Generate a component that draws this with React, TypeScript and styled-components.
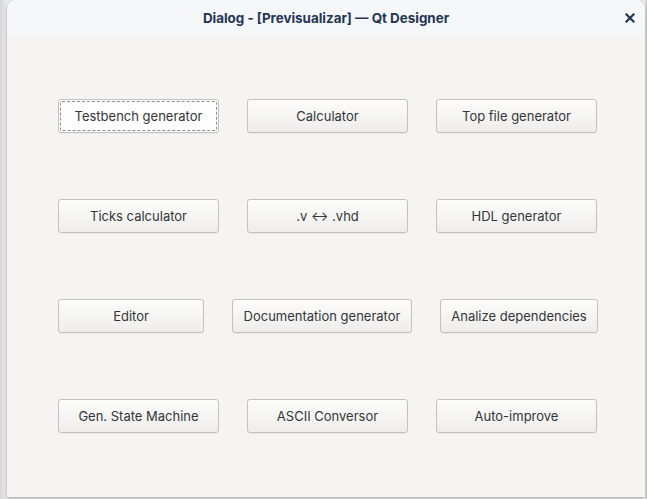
import React from "react";
import styled, { createGlobalStyle } from "styled-components";

const Global = createGlobalStyle`
  html, body { margin: 0; padding: 0; }
  body {
    width: 647px;
    height: 499px;
    overflow: hidden;
    background: #c9c9c9;
    font-family: Inter, "Noto Sans", sans-serif;
  }
`;

const Screen = styled.div`
  width: 647px;
  height: 499px;
  padding-left: 7px;
  padding-right: 2px;
  box-sizing: border-box;
  background: linear-gradient(to right, #d6d6d6, #ececec 7px, #ececec calc(100% - 2px), #bdbdbd);
`;

const Window = styled.div`
  width: 638px;
  height: 497px;
  border-radius: 9px 9px 0 0;
  overflow: hidden;
  display: flex;
  flex-direction: column;
  box-shadow: 0 1px 3px rgba(0, 0, 0, 0.35);
  background: #f5f4f2;
`;

const TitleBar = styled.div`
  height: 35px;
  flex: none;
  background: #f6f7f9;
  display: flex;
  align-items: center;
  justify-content: center;
  position: relative;
`;

const Title = styled.div`
  font-family: Inter, "Noto Sans", sans-serif;
  font-weight: 700;
  font-size: 13.4px;
  color: #1f3654;
`;

const Close = styled.div`
  position: absolute;
  right: 10px;
  top: 12px;
  width: 11px;
  height: 11px;
  display: flex;
  align-items: center;
  justify-content: center;
`;

const Body = styled.div`
  flex: 1;
  padding: 64px 0 0 51px;
  display: flex;
  flex-direction: column;
  gap: 66px;
`;

const Row = styled.div`
  display: flex;
  gap: 28px;
`;

const Button = styled.div<{ $w: number; $focus?: boolean }>`
  width: ${(p) => p.$w}px;
  height: 34px;
  box-sizing: border-box;
  border: 1px solid #c4c1bc;
  border-radius: 3px;
  background: linear-gradient(to bottom, #fcfcfb, #eeedeb);
  box-shadow: 0 1px 0 rgba(0, 0, 0, 0.04);
  display: flex;
  align-items: center;
  justify-content: center;
  font-family: Inter, "Noto Sans", sans-serif;
  font-size: 13px;
  color: #333638;
  position: relative;
  ${(p) =>
    p.$focus
      ? `
    &::after {
      content: "";
      position: absolute;
      inset: 1px;
      border: 1px dashed #8e8e8e;
      border-radius: 2px;
    }
    background: #fdfdfd;
  `
      : ""}
`;

const rows: { label: string; w: number; focus?: boolean }[][] = [
  [
    { label: "Testbench generator", w: 161, focus: true },
    { label: "Calculator", w: 161 },
    { label: "Top file generator", w: 161 },
  ],
  [
    { label: "Ticks calculator", w: 161 },
    { label: ".v \u2194 .vhd", w: 161 },
    { label: "HDL generator", w: 161 },
  ],
  [
    { label: "Editor", w: 146 },
    { label: "Documentation generator", w: 180 },
    { label: "Analize dependencies", w: 158 },
  ],
  [
    { label: "Gen. State Machine", w: 161 },
    { label: "ASCII Conversor", w: 161 },
    { label: "Auto-improve", w: 161 },
  ],
];

export default function App() {
  return (
    <>
      <Global />
      <Screen>
        <Window>
          <TitleBar>
            <Title>Dialog - [Previsualizar] — Qt Designer</Title>
            <Close>
              <svg width="10" height="10" viewBox="0 0 10 10">
                <path d="M1.5 1.5 L8.5 8.5 M8.5 1.5 L1.5 8.5" stroke="#1f3654" strokeWidth="2.2" strokeLinecap="square" />
              </svg>
            </Close>
          </TitleBar>
          <Body>
            {rows.map((r, i) => (
              <Row key={i}>
                {r.map((b) => (
                  <Button key={b.label} $w={b.w} $focus={b.focus}>
                    {b.label}
                  </Button>
                ))}
              </Row>
            ))}
          </Body>
        </Window>
      </Screen>
    </>
  );
}
